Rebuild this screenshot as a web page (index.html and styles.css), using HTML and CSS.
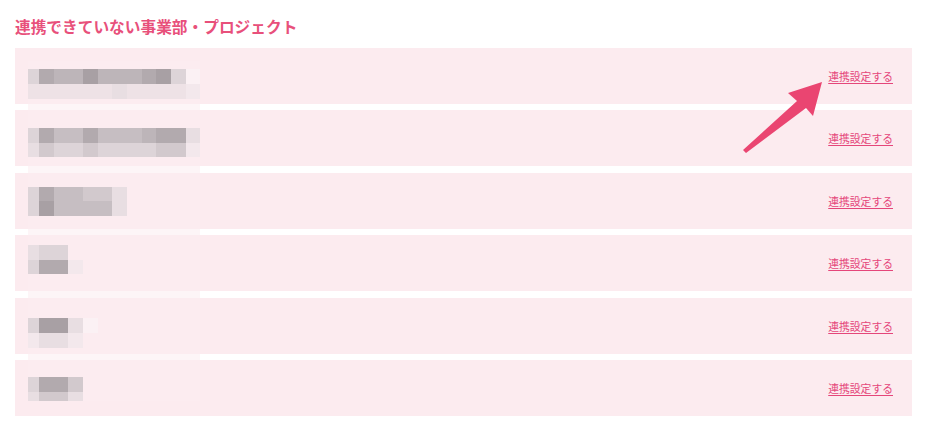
FILE: index.html
```html
<!DOCTYPE html>
<html lang="ja">
<head>
<meta charset="utf-8">
<title>連携できていない事業部・プロジェクト</title>
<link rel="stylesheet" href="styles.css">
</head>
<body>
<main class="page">
  <h2 class="title">連携できていない事業部・プロジェクト</h2>
  <ul class="list">
    <li class="row"><span class="name"></span><a class="link" href="#">連携設定する</a></li>
    <li class="row"><span class="name"></span><a class="link" href="#">連携設定する</a></li>
    <li class="row"><span class="name"></span><a class="link" href="#">連携設定する</a></li>
    <li class="row"><span class="name"></span><a class="link" href="#">連携設定する</a></li>
    <li class="row"><span class="name"></span><a class="link" href="#">連携設定する</a></li>
    <li class="row"><span class="name"></span><a class="link" href="#">連携設定する</a></li>
  </ul>

  <div class="mosaic" aria-hidden="true">
    <div class="mr top"></div>
    <div class="mr"><i class="f"></i><i class="b"></i><i class="c"></i><i class="c"></i><i class="a"></i><i class="c"></i><i class="c"></i><i class="c"></i><i class="b"></i><i class="a"></i><i class="f"></i><i class="i"></i></div>
    <div class="mr"><i class="gh"></i><i class="gh"></i><i class="gh"></i><i class="gh"></i><i class="gh"></i><i class="gh"></i><i class="g"></i><i class="gh"></i><i class="gh"></i><i class="gh"></i><i class="gh"></i><i class="h"></i></div>
    <div class="mr"></div>
    <div class="mr"></div>
    <div class="mr"><i class="f"></i><i class="b"></i><i class="d"></i><i class="d"></i><i class="b"></i><i class="d"></i><i class="d"></i><i class="d"></i><i class="c"></i><i class="b"></i><i class="b"></i><i class="g"></i></div>
    <div class="mr"><i class="g"></i><i class="e"></i><i class="f"></i><i class="f"></i><i class="e"></i><i class="f"></i><i class="f"></i><i class="f"></i><i class="f"></i><i class="e"></i><i class="e"></i><i class="h"></i></div>
    <div class="mr"></div>
    <div class="mr"></div>
    <div class="mr"><i class="f"></i><i class="b"></i><i class="d"></i><i class="d"></i><i class="e"></i><i class="e"></i><i class="g"></i></div>
    <div class="mr"><i class="f"></i><i class="a"></i><i class="d"></i><i class="d"></i><i class="d"></i><i class="d"></i><i class="g"></i></div>
    <div class="mr"></div>
    <div class="mr"></div>
    <div class="mr"><i class="g"></i><i class="f"></i><i class="f"></i></div>
    <div class="mr"><i class="f"></i><i class="b"></i><i class="b"></i><i class="h"></i></div>
    <div class="mr"></div>
    <div class="mr"></div>
    <div class="mr"></div>
    <div class="mr"><i class="f"></i><i class="a"></i><i class="a"></i><i class="g"></i><i class="i"></i></div>
    <div class="mr"><i class="h"></i><i class="g"></i><i class="g"></i><i class="h"></i></div>
    <div class="mr"></div>
    <div class="mr"></div>
    <div class="mr"><i class="f"></i><i class="b"></i><i class="b"></i><i class="e"></i></div>
    <div class="mr bottom"><i class="g"></i><i class="e"></i><i class="e"></i><i class="g"></i></div>
  </div>

  <svg class="arrow" width="926" height="428" viewBox="0 0 926 428" aria-hidden="true">
    <polygon points="822,82 788,93 797,101 743,150 746,153 806,108 813,116" fill="#ea4571"/>
  </svg>
</main>
</body>
</html>
```

FILE: styles.css
```css
* {
  box-sizing: border-box;
}

html, body {
  margin: 0;
  padding: 0;
  background: #ffffff;
}

body {
  font-family: "Noto Sans CJK JP", "Noto Sans", sans-serif;
  width: 926px;
  height: 428px;
  overflow: hidden;
}

.page {
  position: relative;
  padding: 15px 14px 0 15px;
}

.title {
  margin: 0 0 9px 0;
  font-size: 15.7px;
  line-height: 24px;
  font-weight: 700;
  color: #e8507b;
  letter-spacing: 0;
}

.list {
  list-style: none;
  margin: 0;
  padding: 0;
  display: flex;
  flex-direction: column;
  gap: 6.4px;
}

.row {
  height: 56px;
  background: #fcebef;
  display: flex;
  align-items: center;
  justify-content: space-between;
  padding: 0 19px 0 13px;
}

.name {
  width: 170px;
  height: 20px;
}

.link {
  font-size: 10.8px;
  line-height: 14px;
  color: #e5467a;
  text-decoration: underline;
  text-underline-offset: 2px;
}

.mosaic {
  position: absolute;
  left: 28px;
  top: 61px;
  width: 172px;
  height: 340px;
  background: rgba(252, 236, 240, 0.55);
  display: flex;
  flex-direction: column;
}

.mr {
  display: flex;
  height: 14.667px;
  flex: none;
}

.mr.top {
  height: 8.3px;
}

.mr.bottom {
  height: 9px;
}

.mr i {
  display: block;
  width: 14.667px;
  height: 100%;
  flex: none;
}

.mr i:first-child {
  width: 11px;
}

.mr .a { background: #a8a0a4; }
.mr .b { background: #b2aaae; }
.mr .c { background: #bdb5b9; }
.mr .d { background: #c6bec2; }
.mr .e { background: #d2c9cd; }
.mr .f { background: #ddd4d8; }
.mr .g { background: #e8dee2; }
.mr .gh { background: #eee2e6; }
.mr .h { background: #f3e8ec; }
.mr .i { background: #fbf1f4; }

.arrow {
  position: absolute;
  left: 0;
  top: 0;
  pointer-events: none;
}
```
